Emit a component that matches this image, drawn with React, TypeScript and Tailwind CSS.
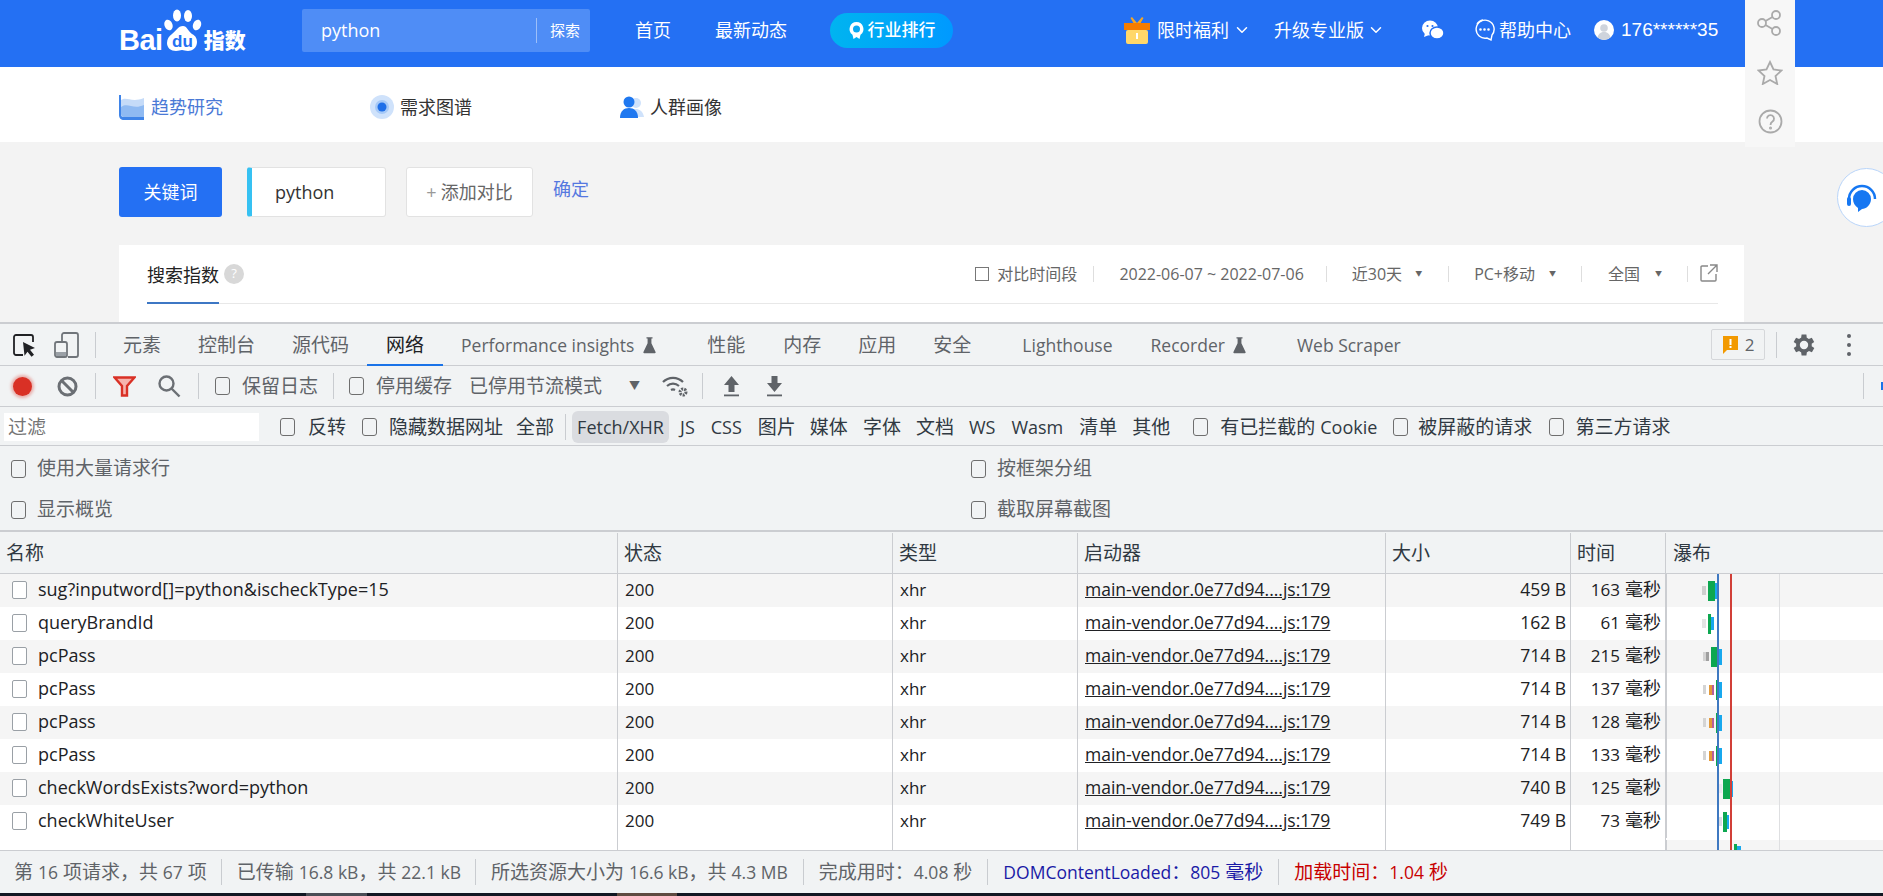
import type { ReactNode } from 'react';
import { ChevronDown } from 'lucide-react';

const rows = [
  { name: 'sug?inputword[]=python&ischeckType=15', size: '459 B', time: '163' },
  { name: 'queryBrandId', size: '162 B', time: '61' },
  { name: 'pcPass', size: '714 B', time: '215' },
  { name: 'pcPass', size: '714 B', time: '137' },
  { name: 'pcPass', size: '714 B', time: '128' },
  { name: 'pcPass', size: '714 B', time: '133' },
  { name: 'checkWordsExists?word=python', size: '740 B', time: '125' },
  { name: 'checkWhiteUser', size: '749 B', time: '73' },
];

// left / width are px from the start of the waterfall column, h is the bar height
const waterfall = [
  [{ l: 35, w: 4, h: 9, c: '#cfcfcf' }, { l: 41, w: 7, h: 20, c: '#0da750' }, { l: 48, w: 3, h: 16, c: '#18a8ee' }],
  [{ l: 35, w: 4, h: 9, c: '#e4e4e4' }, { l: 41, w: 3, h: 20, c: '#0da750' }, { l: 44, w: 3, h: 13, c: '#18a8ee' }],
  [{ l: 36, w: 3, h: 9, c: '#d4d4d4' }, { l: 39, w: 3, h: 9, c: '#a0a0a0' }, { l: 44, w: 8, h: 20, c: '#0da750' }, { l: 52, w: 3, h: 16, c: '#18a8ee' }],
  [{ l: 36, w: 3, h: 9, c: '#d4d4d4' }, { l: 42, w: 3, h: 10, c: '#e39a3a' }, { l: 45, w: 2, h: 10, c: '#b8609a' }, { l: 49, w: 3, h: 20, c: '#0da750' }, { l: 52, w: 3, h: 16, c: '#18a8ee' }],
  [{ l: 36, w: 3, h: 9, c: '#d4d4d4' }, { l: 42, w: 3, h: 10, c: '#e39a3a' }, { l: 45, w: 2, h: 10, c: '#b8609a' }, { l: 49, w: 3, h: 20, c: '#0da750' }, { l: 52, w: 3, h: 16, c: '#18a8ee' }],
  [{ l: 36, w: 3, h: 9, c: '#d4d4d4' }, { l: 42, w: 3, h: 10, c: '#e39a3a' }, { l: 45, w: 2, h: 10, c: '#b8609a' }, { l: 49, w: 3, h: 20, c: '#0da750' }, { l: 52, w: 3, h: 16, c: '#18a8ee' }],
  [{ l: 50, w: 5, h: 9, c: '#e8e8ee' }, { l: 56, w: 7, h: 20, c: '#0da750' }, { l: 63, w: 3, h: 16, c: '#18a8ee' }],
  [{ l: 52, w: 3, h: 9, c: '#d8dce4' }, { l: 56, w: 4, h: 20, c: '#0da750' }, { l: 60, w: 2, h: 14, c: '#18a8ee' }],
];

const Check = () => (
  <span className="block h-[18px] w-[15px] shrink-0 rounded-[3px] border-[1.5px] border-[#6e6e6e] bg-transparent" />
);

const Sep = () => <span className="block h-[26px] w-px shrink-0 bg-[#c9ccd0]" />;

const CardSep = () => <span className="block h-[16px] w-px shrink-0 bg-[#dedede]" />;

// latin runs are set a little smaller than the CJK around them
const L = ({ children }: { children: ReactNode }) => <span className="text-[17.5px]">{children}</span>;

const Flask = () => (
  <svg width="13" height="18" viewBox="0 0 15 20" className="shrink-0">
    <path d="M4 1h7v1.5H9.7V8l4.8 10a1 1 0 0 1-.9 1.5H1.4A1 1 0 0 1 .5 18L5.3 8V2.5H4z" fill="#5f6368" />
  </svg>
);

const Logo = () => (
  <div className="flex w-[126px] shrink-0 items-end self-start pt-[9px] whitespace-nowrap text-white">
    <span className="font-['Liberation_Sans'] text-[29px] leading-[25px] font-bold tracking-[-0.5px]">Bai</span>
    <svg width="38" height="44" viewBox="0 0 38 44" className="ml-[1px] shrink-0">
      <ellipse cx="4.5" cy="16" rx="4" ry="5.5" fill="#fff" transform="rotate(-20 4.5 16)" />
      <ellipse cx="13" cy="6.5" rx="4" ry="6" fill="#fff" />
      <ellipse cx="24" cy="7" rx="4" ry="6" fill="#fff" />
      <ellipse cx="33" cy="16" rx="4" ry="5.5" fill="#fff" transform="rotate(20 33 16)" />
      <path d="M19 17c4 0 5 5 9 8 4 2 5 5 5 8 0 6-5 9-9 9-3 0-4-1-6-1s-3 1-6 1c-5 0-9-3-9-8 0-4 2-7 5-9 4-3 6-8 11-8z" fill="#fff" />
      <text x="18.5" y="38" textAnchor="middle" fontSize="17" fontWeight="700" fontFamily="Liberation Sans" fill="#2470f3">du</text>
    </svg>
    <span className="ml-[2px] text-[21px] leading-[25px] font-black">指数</span>
  </div>
);

function TopBar() {
  return (
    <header className="flex h-[67px] shrink-0 items-center bg-[#2470f3] pb-[7px] pl-[119px] text-[18px] text-white">
      <Logo />
      <div className="ml-[57px] flex h-[43px] w-[288px] shrink-0 items-center rounded-[2px] bg-[#4f8df6] pl-[19px]">
        <span className="w-[215px]">python</span>
        <span className="h-[25px] w-px bg-[#9dbff9]" />
        <span className="ml-[13px] text-[15px]">探索</span>
      </div>
      <span className="ml-[45px]">首页</span>
      <span className="ml-[44px]">最新动态</span>
      <div className="ml-[43px] flex h-[35px] w-[123px] shrink-0 items-center justify-center gap-[3px] rounded-full bg-gradient-to-r from-[#00b4f0] to-[#0099ff] text-[17px] font-medium">
        <svg width="17" height="19" viewBox="0 0 17 19">
          <path d="M8.5 1a7 7 0 0 0-4 12.7L5.5 18l3-2 3 2 1-4.300A7 7 0 0 0 8.500 1z" fill="#fff" />
          <circle cx="8.500" cy="8" r="3.500" fill="#0aa8f2" />
        </svg>
        行业排行
      </div>
      <svg width="26" height="28" viewBox="0 0 26 28" className="ml-[171px] shrink-0">
        <path d="M8 1l5 6 5-6 1.500 1L16 8h-6L6.500 2z" fill="#f5a623" />
        <rect x="0" y="7" width="26" height="7" fill="#f57c00" />
        <rect x="2" y="14" width="22" height="14" rx="2" fill="#ffd76a" />
        <rect x="12" y="17" width="2" height="6" fill="#fff" />
      </svg>
      <span className="ml-[7px]">限时福利</span>
      <ChevronDown size={18} className="ml-[4px]" />
      <span className="ml-[23px]">升级专业版</span>
      <ChevronDown size={18} className="ml-[3px]" />
      <svg width="22" height="20" viewBox="0 0 22 20" className="ml-[37px] shrink-0">
        <ellipse cx="8" cy="8" rx="8" ry="7.500" fill="#fff" />
        <path d="M3 13l-1 4 5-2z" fill="#fff" />
        <ellipse cx="15" cy="13" rx="7" ry="6" fill="#fff" stroke="#2470f3" strokeWidth="1.500" />
        <circle cx="5.500" cy="6" r="1.100" fill="#2470f3" />
        <circle cx="10.500" cy="6" r="1.100" fill="#2470f3" />
      </svg>
      <svg width="21" height="24" viewBox="0 0 21 24" className="ml-[30px] shrink-0" fill="none" stroke="#fff" strokeWidth="1.400">
        <path d="M18 17a9 9 0 1 0-5 3l4 2z" />
        <path d="M3 6a9 9 0 0 1 6-4" />
        <circle cx="6.500" cy="11.500" r=".6" fill="#fff" />
        <circle cx="10.500" cy="11.500" r=".6" fill="#fff" />
        <circle cx="14.500" cy="11.500" r=".6" fill="#fff" />
      </svg>
      <span className="ml-[4px]">帮助中心</span>
      <svg width="20" height="20" viewBox="0 0 20 20" className="ml-[23px] shrink-0">
        <circle cx="10" cy="10" r="10" fill="#fff" />
        <circle cx="10" cy="8" r="3.800" fill="#cfd4dc" />
        <path d="M3.500 17.500c1-4 3.500-5.500 6.500-5.500s5.500 1.500 6.500 5.500a10 10 0 0 1-13 0z" fill="#cfd4dc" />
      </svg>
      <span className="ml-[7px] font-['Liberation_Sans'] text-[19px]">176******35</span>
    </header>
  );
}

function SubNav() {
  return (
    <nav className="flex h-[75px] shrink-0 items-center bg-white pt-[5px] pl-[119px] text-[18px] text-[#333]">
      <svg width="25" height="25" viewBox="0 0 25 25" className="shrink-0">
        <path d="M0 0h2v19c0 2 1 3 3 3h20v3H5c-3 0-5-2-5-5z" fill="#3f84e8" />
        <path d="M2 5c6-4 10 3 23-2v19H5c-2 0-3-1-3-3z" fill="#c5dbf8" />
        <path d="M2 12c7-5 12 3 23-2v12H5c-2 0-3-1-3-3z" fill="#8fbaf2" />
      </svg>
      <span className="ml-[7px] text-[#4a79d6]">趋势研究</span>
      <svg width="24" height="24" viewBox="0 0 24 24" className="ml-[147px] shrink-0">
        <circle cx="12" cy="12" r="12" fill="#cfe2fb" />
        <circle cx="12" cy="12" r="7" fill="#a6c9f7" />
        <circle cx="12" cy="12" r="4.500" fill="#1f6fe8" />
      </svg>
      <span className="ml-[6px]">需求图谱</span>
      <svg width="24" height="24" viewBox="0 0 24 24" className="ml-[148px] shrink-0">
        <circle cx="16" cy="8" r="5" fill="#cfe2fb" />
        <path d="M10 22c0-6 3-8 6-8s7 2 8 8z" fill="#cfe2fb" />
        <circle cx="9" cy="7" r="5.500" fill="#1f78f0" />
        <path d="M0 23c0-7 4-10 9-10s9 3 9 10z" fill="#1f78f0" />
      </svg>
      <span className="ml-[6px]">人群画像</span>
    </nav>
  );
}

function KeywordRow() {
  return (
    <div className="flex h-[103px] shrink-0 items-start bg-[#f3f3f3] pt-[25px] pl-[119px] text-[18px]">
      <div className="flex h-[50px] w-[103px] items-center justify-center rounded-[3px] bg-[#2470f3] text-white">关键词</div>
      <div className="ml-[25px] flex h-[50px] w-[139px] items-center rounded-[3px] border border-l-[5px] border-[#e2e2e2] border-l-[#36c1f2] bg-white pl-[23px] text-[#333]">python</div>
      <div className="ml-[20px] flex h-[50px] w-[127px] items-center justify-center rounded-[3px] border border-[#e2e2e2] bg-white text-[#666]">
        <span className="mr-[4px] text-[#999]">+</span>添加对比
      </div>
      <span className="mt-[9px] ml-[20px] text-[#5578e0]">确定</span>
    </div>
  );
}

function IndexCard() {
  return (
    <div className="h-[77px] shrink-0 bg-[#f3f3f3] pl-[119px]">
      <div className="h-full w-[1625px] bg-white pr-[26px] pl-[28px]">
        <div className="flex h-[59px] items-center border-b border-[#e8e8e8] text-[16px] text-[#666]">
          <div className="flex h-full items-center">
            <span className="relative flex h-full items-center pt-[2px] text-[18px] text-[#222]">
              搜索指数
              <span className="absolute right-0 bottom-[-1px] left-0 h-[2px] bg-[#3d77c4]" />
            </span>
            <span className="ml-[5px] flex h-[20px] w-[20px] items-center justify-center rounded-full bg-[#d8d8d8] text-[13px] text-white">?</span>
          </div>
          <span className="ml-auto block h-[14px] w-[14px] border border-[#777]" />
          <span className="ml-[8px]">对比时间段</span>
          <span className="ml-[16px]"><CardSep /></span>
          <span className="ml-[25px]">2022-06-07 ~ 2022-07-06</span>
          <span className="ml-[22px]"><CardSep /></span>
          <span className="ml-[25px]">近30天</span>
          <span className="ml-[13px] text-[7px]">▼</span>
          <span className="ml-[26px]"><CardSep /></span>
          <span className="ml-[25px]">PC+移动</span>
          <span className="ml-[14px] text-[7px]">▼</span>
          <span className="ml-[25px]"><CardSep /></span>
          <span className="ml-[26px]">全国</span>
          <span className="ml-[15px] text-[7px]">▼</span>
          <span className="ml-[25px]"><CardSep /></span>
          <svg width="18" height="18" viewBox="0 0 18 18" className="mb-[3px] ml-[12px] shrink-0" fill="none" stroke="#888" strokeWidth="1.400">
            <path d="M8 2H2a1 1 0 0 0-1 1v13a1 1 0 0 0 1 1h13a1 1 0 0 0 1-1v-6" />
            <path d="M10 1h7v7M17 1L8 10" />
          </svg>
        </div>
      </div>
    </div>
  );
}

function TabsBar() {
  return (
    <div className="flex h-[44px] shrink-0 items-center border-t-2 border-b border-[#cbcdd1] bg-[#f1f3f4] pl-[13px] text-[#5f6368]">
      <svg width="23" height="24" viewBox="0 0 23 24" className="shrink-0" fill="none">
        <path d="M10 22H3a2 2 0 0 1-2-2V4a2 2 0 0 1 2-2h15a2 2 0 0 1 2 2v5" stroke="#202124" strokeWidth="1.800" />
        <path d="M10 9l12 6-5 1.800 4 5-2.500 2-4-5-3 4z" fill="#202124" />
      </svg>
      <svg width="25" height="26" viewBox="0 0 25 26" className="ml-[18px] shrink-0" fill="none">
        <path d="M8 9V3a2 2 0 0 1 2-2h12a2 2 0 0 1 2 2v20a2 2 0 0 1-2 2H14" stroke="#70757a" strokeWidth="1.800" />
        <rect x="1" y="10" width="12" height="15" rx="2" stroke="#70757a" strokeWidth="1.800" />
        <rect x="2" y="20" width="10" height="4" fill="#9aa0a6" />
      </svg>
      <span className="mr-[27px] ml-[16px] block h-[26px] w-px bg-[#c9ccd0]" />
      <div className="flex h-full items-center pt-[1px] text-[19px]">
        <span className="mr-[37px]">元素</span>
        <span className="mr-[37px]">控制台</span>
        <span className="mr-[18px]">源代码</span>
        <span className="relative mr-[18px] flex h-full items-center px-[19px] text-[#202124]">
          网络
          <span className="absolute right-0 bottom-[-1px] left-0 h-[2px] bg-[#1a73e8]" />
        </span>
        <span className="mr-[9px] text-[17.5px]">Performance insights</span>
        <span className="mr-[51px]"><Flask /></span>
        <span className="mr-[38px]">性能</span>
        <span className="mr-[37px]">内存</span>
        <span className="mr-[37px]">应用</span>
        <span className="mr-[51px]">安全</span>
        <span className="mr-[38px] text-[17.5px]">Lighthouse</span>
        <span className="mr-[8px] text-[17.5px]">Recorder</span>
        <span className="mr-[51px]"><Flask /></span>
        <span className="text-[17.5px]">Web Scraper</span>
      </div>
      <div className="ml-auto flex h-[31px] w-[54px] items-center justify-center gap-[6px] rounded-[2px] border border-[#d5d7da]">
        <svg width="17" height="18" viewBox="0 0 17 18">
          <path d="M1 0h15v14H5l-4 4z" fill="#f29900" />
          <rect x="7.500" y="3" width="2" height="6" fill="#fff" />
          <rect x="7.500" y="10" width="2" height="2" fill="#fff" />
        </svg>
        <span className="text-[17px]">2</span>
      </div>
      <span className="ml-[11px]"><Sep /></span>
      <svg width="24" height="24" viewBox="3 2 20 20" className="ml-[15px] shrink-0" fill="#5f6368">
        <path d="M19.400 13a7.600 7.600 0 0 0 0-2l2.100-1.600-2-3.500-2.500 1a7.600 7.600 0 0 0-1.700-1L15 3.200h-4l-.4 2.700a7.600 7.600 0 0 0-1.700 1l-2.500-1-2 3.500L6.500 11a7.600 7.600 0 0 0 0 2l-2.100 1.600 2 3.500 2.500-1a7.600 7.600 0 0 0 1.700 1l.4 2.700h4l.4-2.700a7.600 7.600 0 0 0 1.700-1l2.500 1 2-3.500zM13 15.500a3.500 3.500 0 1 1 0-7 3.500 3.500 0 0 1 0 7z" />
      </svg>
      <div className="mr-[32px] ml-[31px] flex flex-col gap-[5px]">
        <span className="block h-[4px] w-[4px] rounded-full bg-[#5f6368]" />
        <span className="block h-[4px] w-[4px] rounded-full bg-[#5f6368]" />
        <span className="block h-[4px] w-[4px] rounded-full bg-[#5f6368]" />
      </div>
    </div>
  );
}

function NetToolbar() {
  return (
    <div className="flex h-[41px] shrink-0 items-center border-b border-[#cbcdd1] bg-[#f1f3f4] pl-[13px] text-[19px] text-[#5f6368]">
      <span className="block h-[19px] w-[19px] shrink-0 rounded-full bg-[#d93025] shadow-[0_0_3px_2px_rgba(217,48,37,0.35)]" />
      <svg width="21" height="21" viewBox="0 0 21 21" className="ml-[25px] shrink-0" fill="none" stroke="#6b6f74" strokeWidth="3">
        <circle cx="10.500" cy="10.500" r="8.500" />
        <path d="M4.500 4.500l12 12" />
      </svg>
      <span className="mr-[17px] ml-[17px]"><Sep /></span>
      <svg width="23" height="21" viewBox="0 0 23 21" className="shrink-0">
        <path d="M1.500 1.500h20L14 10v9.500H9V10z" fill="#f6b4ae" stroke="#d93025" strokeWidth="2.400" />
      </svg>
      <svg width="24" height="24" viewBox="0 0 24 24" className="ml-[21px] shrink-0" fill="none" stroke="#6b6f74" strokeWidth="2.400">
        <circle cx="9.500" cy="9.500" r="7" />
        <path d="M14.500 14.500l8 8" />
      </svg>
      <span className="mr-[16px] ml-[17px]"><Sep /></span>
      <Check />
      <span className="ml-[12px]">保留日志</span>
      <span className="mr-[15px] ml-[15px]"><Sep /></span>
      <Check />
      <span className="ml-[12px]">停用缓存</span>
      <span className="ml-[17px]">已停用节流模式</span>
      <span className="ml-[27px] text-[11px]">▼</span>
      <svg width="27" height="24" viewBox="0 0 27 24" className="ml-[22px] shrink-0" fill="none" stroke="#5f6368" strokeWidth="2.200">
        <path d="M1 8a14 14 0 0 1 20 0M5 12a9 9 0 0 1 12 0M9 16a4 4 0 0 1 4 0" />
        <circle cx="21" cy="18" r="3" strokeWidth="3" strokeDasharray="2 1" />
      </svg>
      <span className="mr-[20px] ml-[13px]"><Sep /></span>
      <svg width="17" height="22" viewBox="0 0 17 22" className="shrink-0" fill="#5f6368">
        <path d="M8.500 1L16 10h-4.500v7h-6v-7H1z" />
        <rect x="1" y="19.500" width="15" height="1.800" />
      </svg>
      <svg width="17" height="22" viewBox="0 0 17 22" className="ml-[26px] shrink-0" fill="#5f6368">
        <path d="M8.500 17L16 8h-4.500V1h-6v7H1z" />
        <rect x="1" y="19.500" width="15" height="1.800" />
      </svg>
      <span className="ml-auto"><Sep /></span>
      <span className="ml-[17px] block h-[8px] w-[2px] bg-[#1a73e8]" />
    </div>
  );
}

function FilterRow() {
  return (
    <div className="flex h-[39px] shrink-0 items-center border-b border-[#cbcdd1] bg-[#f1f3f4] pt-[2px] pl-[4px] text-[19px] text-[#303942]">
      <div className="flex h-[28px] w-[255px] shrink-0 items-center bg-white pl-[4px] text-[#757575]">过滤</div>
      <span className="ml-[21px]"><Check /></span>
      <span className="ml-[13px]">反转</span>
      <span className="ml-[16px]"><Check /></span>
      <span className="ml-[12px]">隐藏数据网址</span>
      <span className="ml-[13px]">全部</span>
      <span className="mr-[6px] ml-[11px]"><Sep /></span>
      <span className="flex h-[32px] w-[97px] items-center justify-center rounded-[6px] bg-[#dadce0] text-[18px]">Fetch/XHR</span>
      <span className="ml-[11px] text-[18px]">JS</span>
      <span className="ml-[16px] text-[18px]">CSS</span>
      <span className="ml-[16px]">图片</span>
      <span className="ml-[14px]">媒体</span>
      <span className="ml-[15px]">字体</span>
      <span className="ml-[15px]">文档</span>
      <span className="ml-[15px] text-[18px]">WS</span>
      <span className="ml-[16px] text-[18px]">Wasm</span>
      <span className="ml-[16px]">清单</span>
      <span className="ml-[15px]">其他</span>
      <span className="ml-[23px]"><Check /></span>
      <span className="ml-[12px]">有已拦截的 <span className="text-[18px]">Cookie</span></span>
      <span className="ml-[16px]"><Check /></span>
      <span className="ml-[10px]">被屏蔽的请求</span>
      <span className="ml-[17px]"><Check /></span>
      <span className="ml-[11px]">第三方请求</span>
    </div>
  );
}

function OptionsPanel() {
  return (
    <div className="grid h-[86px] shrink-0 grid-cols-[960px_1fr] grid-rows-2 border-b-2 border-[#cbcdd1] bg-[#f1f3f4] pt-[2px] pl-[11px] text-[19px] text-[#5f6368]">
      <div className="flex items-center gap-[11px]"><Check />使用大量请求行</div>
      <div className="flex items-center gap-[11px]"><Check />按框架分组</div>
      <div className="flex items-center gap-[11px]"><Check />显示概览</div>
      <div className="flex items-center gap-[11px]"><Check />截取屏幕截图</div>
    </div>
  );
}

const colClass = 'grid grid-cols-[618px_275px_185px_308px_185px_95px_1fr]';
const cellBorder = 'border-r border-[#cbcdd1] pl-[6px]';
const rowCell = 'flex items-center border-r border-[#cbcdd1] pb-[2px] pl-[7px]';

function RequestTable() {
  return (
    <div className="flex h-[319px] shrink-0 flex-col overflow-hidden border-b border-[#cbcdd1] bg-white text-[17px] text-[#202124]">
      <div className={`${colClass} h-[42px] shrink-0 items-stretch border-b border-[#cbcdd1] bg-[#f1f3f4] pt-[1px] text-[19px] text-[#303942]`}>
        {['名称', '状态', '类型', '启动器', '大小', '时间'].map((h) => (
          <div key={h} className={`${cellBorder} flex items-center`}>{h}</div>
        ))}
        <div className="flex items-center pl-[7px]">瀑布</div>
      </div>
      <div className="relative flex-1">
        {rows.map((r, i) => (
          <div key={i} className={`${colClass} h-[33px] ${i % 2 === 0 ? 'bg-[#f5f5f5]' : 'bg-white'}`}>
            <div className={`${rowCell} gap-[11px] !pl-[12px] text-[18px]`}>
              <span className="block h-[18px] w-[15px] shrink-0 rounded-[2px] border-[1.5px] border-[#9aa0a6] bg-white" />
              {r.name}
            </div>
            <div className={rowCell}>200</div>
            <div className={rowCell}>xhr</div>
            <div className={`${rowCell} text-[17.5px] underline`}>main-vendor.0e77d94....js:179</div>
            <div className={`${rowCell} justify-end pr-[4px] text-[17.5px]`}>{r.size}</div>
            <div className={`${rowCell} justify-end pr-[4px]`}>
              {r.time}<span className="ml-[5px] text-[18px]">毫秒</span>
            </div>
            <div className="relative flex items-center border-l border-[#cbcdd1]">
              {waterfall[i].map((b, j) => (
                <span key={j} className="absolute block" style={{ left: b.l, width: b.w, height: b.h, background: b.c }} />
              ))}
            </div>
          </div>
        ))}
        {/* blank remainder, only the waterfall keeps its stripes */}
        <div className={`${colClass} h-[12px]`}>
          <div className={cellBorder} />
          <div className={cellBorder} />
          <div className={cellBorder} />
          <div className={cellBorder} />
          <div className={cellBorder} />
          <div className={cellBorder} />
          <div className="relative mt-[2px] border-l border-[#cbcdd1] bg-[#f5f5f5]">
            <span className="absolute top-[4px] left-[67px] h-[8px] w-[3px] bg-[#0da750]" />
            <span className="absolute top-[6px] left-[70px] h-[6px] w-[4px] bg-[#18a8ee]" />
          </div>
        </div>
        {/* time guides sit on top of the waterfall rows */}
        <span className="absolute top-0 bottom-0 left-[1717px] w-[2px] bg-[#3f79c1]" />
        <span className="absolute top-0 bottom-0 left-[1730px] w-[2px] bg-[#d13f38]" />
        <span className="absolute top-0 bottom-0 left-[1779px] w-px bg-[#dedfe1]" />
      </div>
    </div>
  );
}

function StatusBar() {
  return (
    <div className="flex h-[42px] shrink-0 items-center bg-[#f1f3f4] pl-[14px] text-[19px] text-[#5f6368]">
      <span>第 <L>16</L> 项请求，共 <L>67</L> 项</span>
      <span className="mr-[15px] ml-[14px]"><Sep /></span>
      <span>已传输 <L>16.8 kB</L>，共 <L>22.1 kB</L></span>
      <span className="mr-[15px] ml-[14px]"><Sep /></span>
      <span>所选资源大小为 <L>16.6 kB</L>，共 <L>4.3 MB</L></span>
      <span className="mr-[15px] ml-[15px]"><Sep /></span>
      <span>完成用时：<L>4.08</L> 秒</span>
      <span className="mr-[15px] ml-[15px]"><Sep /></span>
      <span className="text-[#1a1aa6]"><L>DOMContentLoaded</L>：<L>805</L> 毫秒</span>
      <span className="mr-[15px] ml-[15px]"><Sep /></span>
      <span className="text-[#c80000]">加载时间：<L>1.04</L> 秒</span>
    </div>
  );
}

function Taskbar() {
  return (
    <div className="flex h-[3px] shrink-0 bg-[#111722]">
      <span className="ml-[306px] w-[61px] bg-[#4a4d55]" />
      <span className="ml-[250px] w-[60px] bg-[#5e4a40]" />
    </div>
  );
}

export default function App() {
  return (
    <div className="relative flex h-[896px] w-[1883px] flex-col overflow-hidden bg-[#f3f3f3] font-['Open_Sans','Noto_Sans_CJK_SC',sans-serif]">
      <TopBar />
      <SubNav />
      <KeywordRow />
      <IndexCard />
      <TabsBar />
      <NetToolbar />
      <FilterRow />
      <OptionsPanel />
      <RequestTable />
      <StatusBar />
      <Taskbar />

      {/* floating side tools */}
      <div className="absolute top-0 left-[1745px] flex h-[147px] w-[50px] flex-col items-center gap-[24px] bg-[#f7f7f7] pt-[10px]">
        <svg width="26" height="26" viewBox="0 0 26 26" fill="none" stroke="#aaa" strokeWidth="1.800">
          <circle cx="19" cy="5" r="4" />
          <circle cx="5" cy="13" r="4" />
          <circle cx="19" cy="21" r="4" />
          <path d="M8.500 11l7-4M8.500 15l7 4" />
        </svg>
        <svg width="26" height="25" viewBox="0 0 26 25" fill="none" stroke="#aaa" strokeWidth="1.800">
          <path d="M13 2l3.500 7.500 8 1-6 5.500 1.700 8L13 20l-7.200 4 1.700-8-6-5.500 8-1z" />
        </svg>
        <svg width="25" height="25" viewBox="0 0 25 25" fill="none" stroke="#aaa" strokeWidth="1.800">
          <circle cx="12.500" cy="12.500" r="11" />
          <path d="M9 9.500a3.500 3.500 0 1 1 5.500 3c-1.500 1-2 1.500-2 3.500" />
          <circle cx="12.500" cy="19" r=".6" />
        </svg>
      </div>
      <div className="absolute top-[168px] left-[1837px] flex h-[59px] w-[59px] items-center justify-center rounded-full border border-[#b9d5fa] bg-white">
        <svg width="34" height="34" viewBox="0 0 34 34" className="mr-[10px]">
          <path d="M4 18a13 13 0 0 1 26 0" fill="none" stroke="#1677f2" strokeWidth="2.500" />
          <path d="M8 18a9 9 0 0 1 18 0c0 6-5 10-9 10l-4 3v-4c-3-2-5-5-5-9z" fill="#1677f2" />
          <rect x="2" y="16" width="4" height="9" rx="2" fill="#1677f2" />
        </svg>
      </div>
    </div>
  );
}
